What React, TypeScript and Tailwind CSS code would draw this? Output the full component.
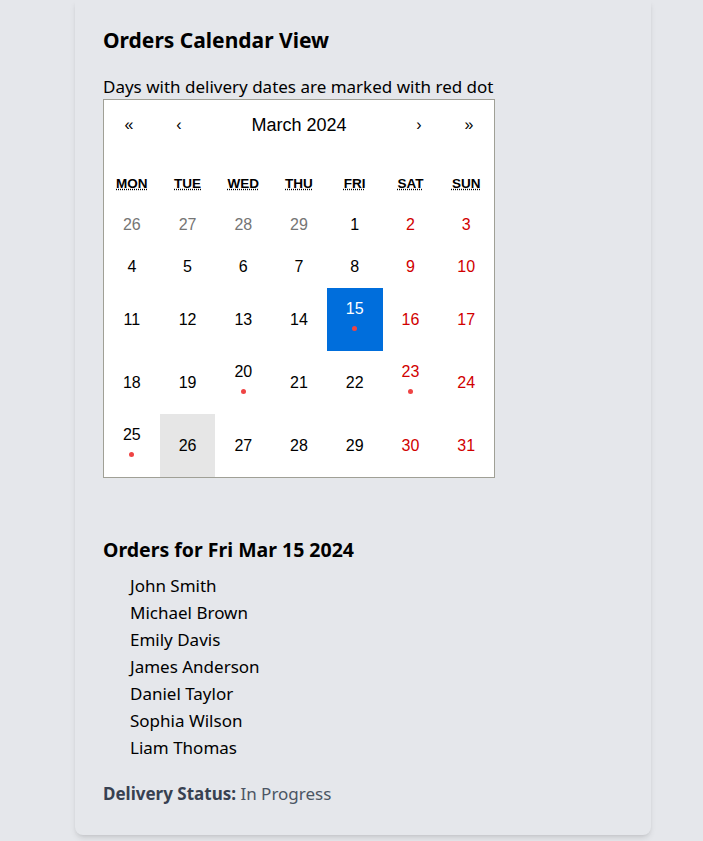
import React from "react";

type Day = { n: number; other?: boolean; weekend?: boolean; dot?: boolean };

const weekdays = ["Mon", "Tue", "Wed", "Thu", "Fri", "Sat", "Sun"];
const deliveryDays = [15, 20, 23, 25];

const buildWeeks = (): Day[][] => {
  const days: Day[] = [26, 27, 28, 29].map((n) => ({ n, other: true }));
  for (let n = 1; n <= 31; n++) {
    days.push({ n, dot: deliveryDays.includes(n) });
  }
  const weeks: Day[][] = [];
  for (let i = 0; i < days.length; i += 7) {
    weeks.push(
      days.slice(i, i + 7).map((d, idx) => ({ ...d, weekend: idx >= 5 }))
    );
  }
  return weeks;
};

const orders = [
  "John Smith",
  "Michael Brown",
  "Emily Davis",
  "James Anderson",
  "Daniel Taylor",
  "Sophia Wilson",
  "Liam Thomas",
];

const Tile = ({ day }: { day: Day }) => {
  const active = !day.other && day.n === 15;
  const hover = !day.other && day.n === 26;
  let color = "text-black";
  if (day.other) color = "text-[#757575]";
  else if (day.weekend) color = "text-[#d10000]";
  if (active) color = "text-white";
  return (
    <div
      className={`flex flex-col items-center justify-center py-[12px] ${
        active ? "bg-[#006edc]" : hover ? "bg-[#e6e6e6]" : ""
      } ${color}`}
    >
      <span className="leading-[18px] text-[16px]">{day.n}</span>
      {day.dot && (
        <span className="flex h-[21px] items-center justify-center">
          <span className="block h-[5px] w-[5px] rounded-full bg-[#ef4444]" />
        </span>
      )}
    </div>
  );
};

const Calendar = () => {
  const weeks = buildWeeks();
  return (
    <div className="w-[392px] border border-[#a0a096] bg-white font-['Liberation_Sans',Arial,sans-serif] text-black">
      <div className="flex h-[50px] items-center">
        <button className="w-[50px] text-[16px]">«</button>
        <button className="w-[50px] text-[16px]">‹</button>
        <span className="flex-1 text-center text-[18px]">March 2024</span>
        <button className="w-[50px] text-[16px]">›</button>
        <button className="w-[50px] text-[16px]">»</button>
      </div>
      <div className="mt-[14px] grid h-[40px] grid-cols-7 items-center text-center text-[13.5px] font-bold uppercase">
        {weekdays.map((w) => (
          <abbr key={w} className="underline decoration-dotted" title={w}>
            {w}
          </abbr>
        ))}
      </div>
      {weeks.map((week, i) => (
        <div key={i} className="grid grid-cols-7">
          {week.map((d) => (
            <Tile key={`${i}-${d.n}`} day={d} />
          ))}
        </div>
      ))}
    </div>
  );
};

const App = () => {
  return (
    <div className="min-h-screen bg-[#e5e7eb] pb-[6px] font-['Noto_Sans',sans-serif] text-black">
      <div className="ml-[75px] w-[576px] rounded-b-lg bg-[#e5e7eb] px-7 pb-[28px] pt-[24px] shadow-md">
        <h1 className="text-[21px] font-bold leading-[32px]">Orders Calendar View</h1>
        <p className="mt-[19px] text-[17px] leading-[24px]">
          Days with delivery dates are marked with red dot
        </p>
        <Calendar />
        <div className="mt-[58px]">
          <h2 className="text-[19.5px] font-bold leading-[28px]">Orders for Fri Mar 15 2024</h2>
          <ul className="mt-[8px] pl-[27px] text-[17px] leading-[27px]">
            {orders.map((o) => (
              <li key={o}>{o}</li>
            ))}
          </ul>
          <p className="mt-[20px] text-[17px] leading-[26px] text-[#374151]">
            <span className="font-bold">Delivery Status:</span>{" "}
            <span className="text-[#4b5563]">In Progress</span>
          </p>
        </div>
      </div>
    </div>
  );
};

export default App;
